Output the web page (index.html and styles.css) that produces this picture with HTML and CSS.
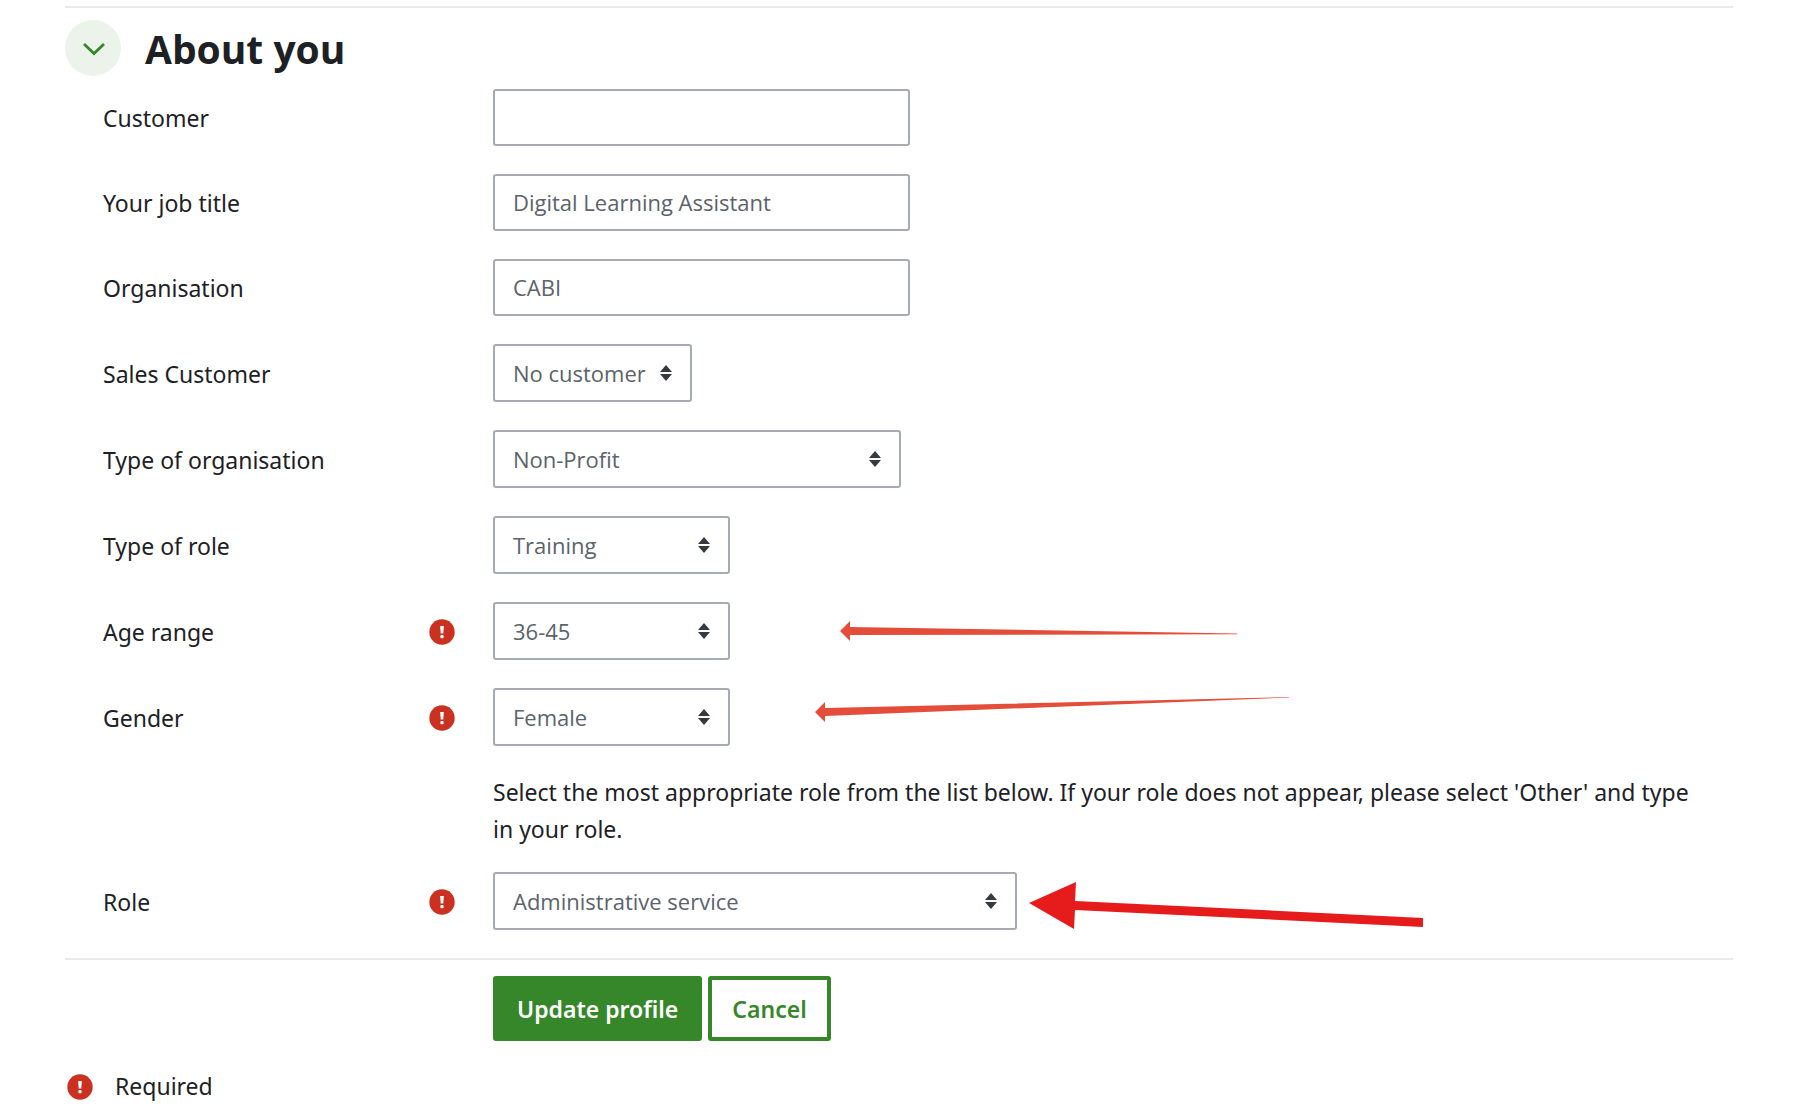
FILE: index.html
```html
<!DOCTYPE html>
<html lang="en">

<head>
	<meta charset="UTF-8">
	<title>Edit profile</title>
	<link rel="stylesheet" href="styles.css">
</head>

<body>

	<!-- icons used more than once -->
	<svg class="sprite" aria-hidden="true">
		<symbol id="icon-required" viewBox="0 0 26 26">
			<circle cx="13" cy="13" r="12.7" fill="#ca3120" />
			<path d="M11.2 7h3.6l-.5 7.4h-2.6z" fill="#fff" />
			<rect x="11.4" y="16" width="3.2" height="3.2" rx="1" fill="#fff" />
		</symbol>
	</svg>

	<main class="container">
		<form class="profile-form">

			<div class="section-header">
				<button type="button" class="toggle" aria-label="Collapse About you">
					<svg width="24" height="14" viewBox="0 0 24 14">
						<path d="M2 2l10 9.5L22 2" fill="none" stroke="#36872a" stroke-width="2.8" />
					</svg>
				</button>
				<h1>About you</h1>
			</div>

			<div class="form-group">
				<label for="customer">Customer</label>
				<input type="text" id="customer" name="customer" class="form-control">
			</div>

			<div class="form-group">
				<label for="jobtitle">Your job title</label>
				<input type="text" id="jobtitle" name="jobtitle" class="form-control" value="Digital Learning Assistant">
			</div>

			<div class="form-group">
				<label for="organisation">Organisation</label>
				<input type="text" id="organisation" name="organisation" class="form-control" value="CABI">
			</div>

			<div class="form-group">
				<label for="salescustomer">Sales Customer</label>
				<select id="salescustomer" name="salescustomer" class="custom-select select-xs">
					<option>No customer</option>
				</select>
			</div>

			<div class="form-group">
				<label for="orgtype">Type of organisation</label>
				<select id="orgtype" name="orgtype" class="custom-select select-md">
					<option>Non-Profit</option>
				</select>
			</div>

			<div class="form-group">
				<label for="roletype">Type of role</label>
				<select id="roletype" name="roletype" class="custom-select select-sm">
					<option>Training</option>
				</select>
			</div>

			<div class="form-group">
				<label for="age">Age range <svg class="required"><use href="#icon-required" /></svg></label>
				<select id="age" name="age" class="custom-select select-sm">
					<option>36-45</option>
				</select>
				<svg class="arrow arrow-age" width="400" height="20" viewBox="0 0 400 20">
					<path d="M0 10L10 0v6L397 12.6v.6L10 14v6z" fill="#e44d3a" />
				</svg>
			</div>

			<div class="form-group">
				<label for="gender">Gender <svg class="required"><use href="#icon-required" /></svg></label>
				<select id="gender" name="gender" class="custom-select select-sm">
					<option>Female</option>
				</select>
				<svg class="arrow arrow-gender" width="476" height="26" viewBox="0 0 476 26">
					<path d="M0 15L10 5v6L474 0v.6L10 19v6z" fill="#e44d3a" />
				</svg>
			</div>

			<p class="help-text">Select the most appropriate role from the list below. If your role does not appear, please select 'Other' and type in your role.</p>

			<div class="form-group">
				<label for="role">Role <svg class="required"><use href="#icon-required" /></svg></label>
				<select id="role" name="role" class="custom-select select-lg">
					<option>Administrative service</option>
				</select>
				<svg class="arrow arrow-role" width="396" height="48" viewBox="0 0 396 48">
					<path d="M0 21L47 0l-1 19L394 36v9L46 28l-1 19z" fill="#e61c1c" />
				</svg>
			</div>

			<div class="form-actions">
				<button type="submit" class="btn btn-primary">Update profile</button>
				<button type="button" class="btn btn-secondary">Cancel</button>
			</div>

			<div class="form-note"><svg class="required"><use href="#icon-required" /></svg> Required</div>

		</form>
	</main>
</body>

</html>
```
FILE: styles.css
```css
* {
	box-sizing: border-box;
}

body {
	margin: 0;
	background-color: #fff;
	color: #1d2125;
	font-family: "Noto Sans", "Open Sans", sans-serif;
	font-size: 23px;
	line-height: 37px;
}

.sprite {
	display: none;
}

.container {
	padding: 6px 65px 0;
}

.profile-form {
	border-top: 2px solid #e9e9f0;
	padding-top: 12px;
}

.section-header {
	display: flex;
	align-items: center;
	gap: 24px;
	margin-bottom: 13px;
}

h1 {
	margin: 0;
	padding-top: 2px;
	font-family: "Open Sans", sans-serif;
	font-size: 39px;
	font-weight: 700;
	line-height: 54px;
}

.toggle {
	display: flex;
	align-items: center;
	justify-content: center;
	width: 56px;
	height: 56px;
	padding: 2px 0 0 2px;
	border: 0;
	border-radius: 50%;
	background-color: #ebf3ea;
	cursor: pointer;
}

.form-group {
	display: grid;
	grid-template-columns: 390px 1fr;
	align-items: center;
	position: relative;
	margin-bottom: 28px;
	padding-left: 38px;
}

.form-group label {
	display: flex;
	align-items: center;
	justify-content: space-between;
	padding: 2px 38px 0 0;
}

.required {
	width: 26px;
	height: 26px;
}

.form-control,
.custom-select {
	height: 57px;
	padding: 0 18px 1px;
	border: 2px solid #a6abb3;
	border-radius: 3px;
	background-color: #fff;
	color: #5b636b;
	font-family: "Open Sans", sans-serif;
	font-size: 22px;
}

.form-control {
	width: 417px;
}

.custom-select {
	height: 58px;
	appearance: none;
	background: #fff url("data:image/svg+xml,%3Csvg xmlns='http://www.w3.org/2000/svg' viewBox='0 0 12 16'%3E%3Cpath fill='%23343a40' d='M6 0l6 7H0zM0 9h12l-6 7z'/%3E%3C/svg%3E") no-repeat right 18px center / 12px 16px;
}

.select-xs {
	width: 199px;
}

.select-sm {
	width: 237px;
}

.select-md {
	width: 408px;
}

.select-lg {
	width: 524px;
}

.help-text {
	margin: 0 0 24px;
	padding: 0 30px 0 428px;
}

/* pointers drawn over the free space beside a field */
.arrow {
	position: absolute;
}

.arrow-age {
	left: 775px;
	top: 19px;
}

.arrow-gender {
	left: 750px;
	top: 9px;
}

.arrow-role {
	left: 964px;
	top: 10px;
}

.form-actions {
	display: flex;
	gap: 6px;
	border-top: 2px solid #e9e9f0;
	padding: 16px 0 27px 428px;
}

.btn {
	height: 65px;
	padding: 0 20px;
	border: 4px solid #36872a;
	border-radius: 3px;
	font-family: inherit;
	font-size: 23px;
	font-weight: 600;
	cursor: pointer;
}

.btn-primary {
	background-color: #36872a;
	color: #fff;
}

.btn-secondary {
	background-color: #fff;
	color: #36872a;
}

.form-note {
	display: flex;
	align-items: center;
	gap: 22px;
	padding-left: 2px;
}
```
